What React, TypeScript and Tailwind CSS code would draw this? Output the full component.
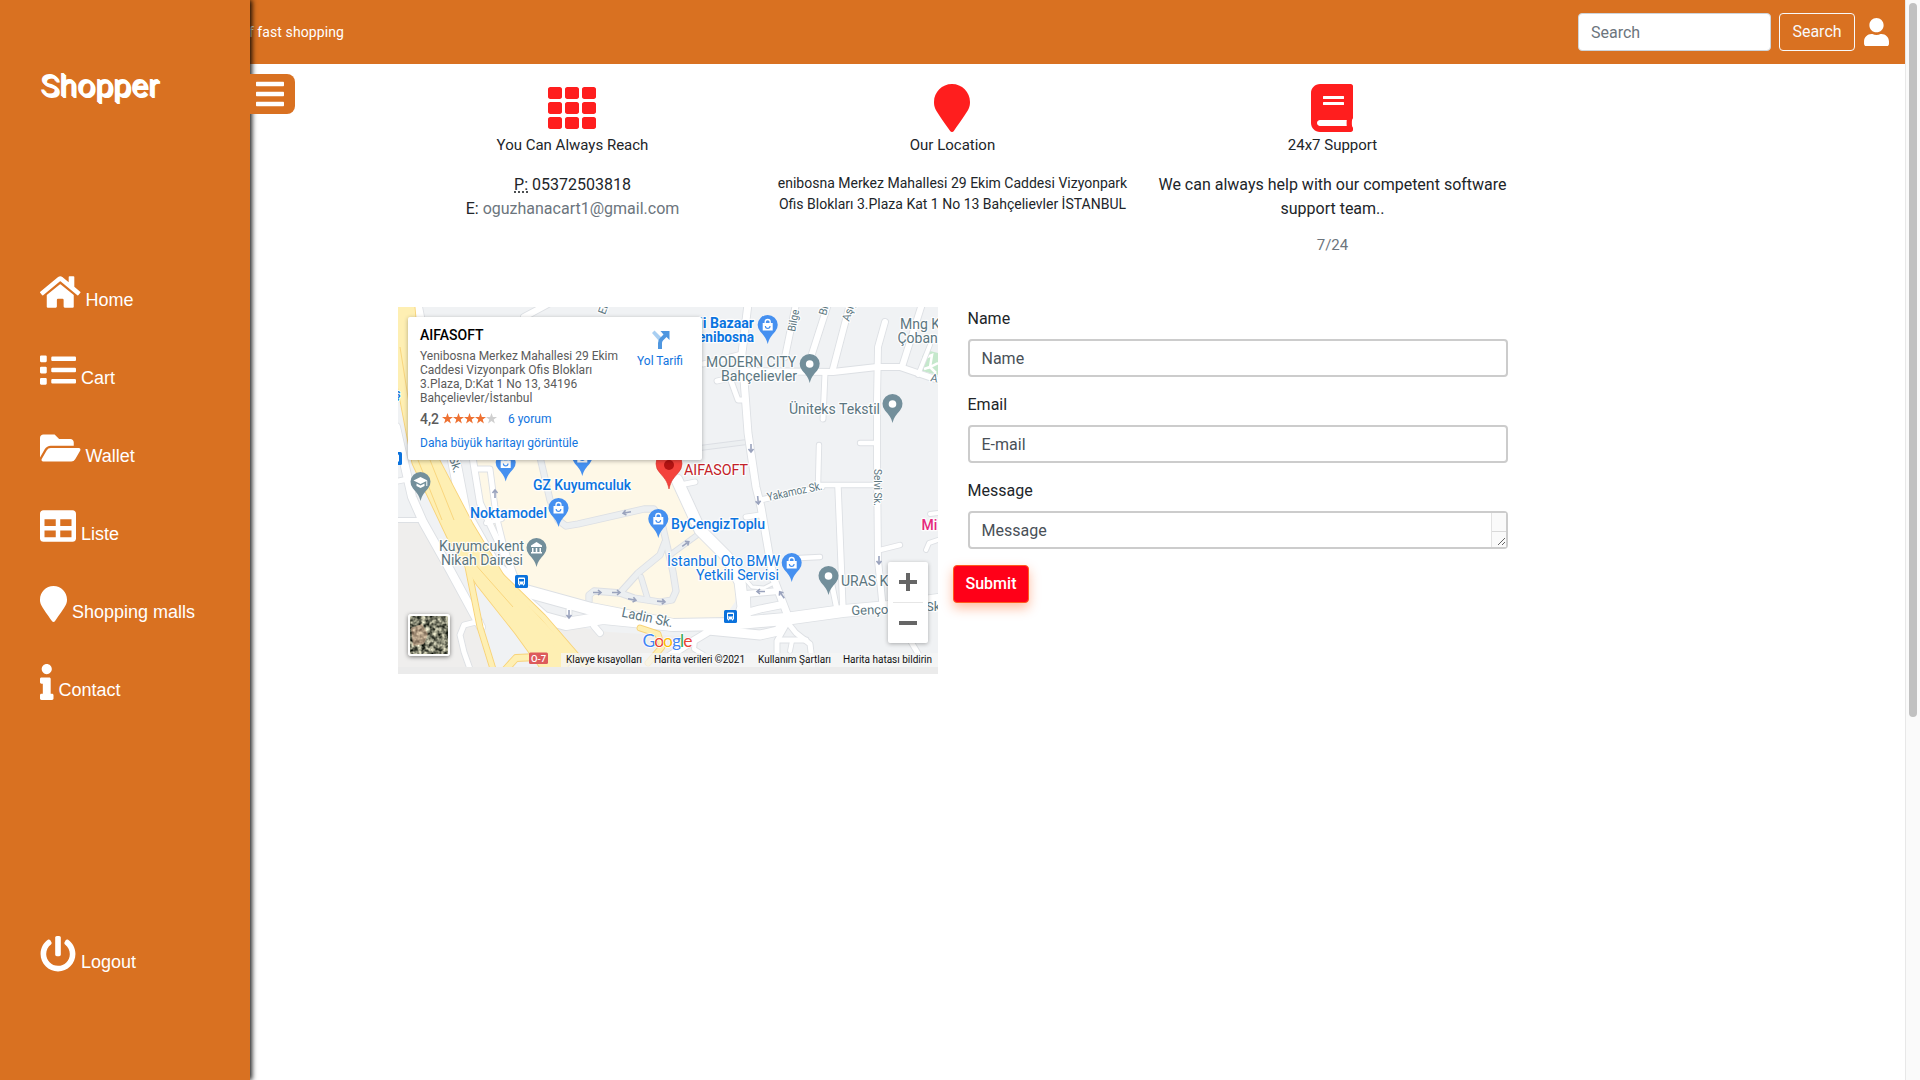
import React from "react";
import {
  FaBars, FaBook, FaFolderOpen, FaHome, FaInfo, FaList, FaMapMarker,
  FaPowerOff, FaTable, FaTh, FaUser,
} from "react-icons/fa";

type Road = [string, number];

const nav = [
  { label: "Home", icon: <FaHome className="h-9 w-[40.5px]" /> },
  { label: "Cart", icon: <FaList className="h-9 w-9" /> },
  { label: "Wallet", icon: <FaFolderOpen className="h-9 w-[40.5px]" /> },
  { label: "Liste", icon: <FaTable className="h-9 w-9" /> },
  { label: "Shopping malls", icon: <FaMapMarker className="h-9 w-[27px]" /> },
  { label: "Contact", icon: <FaInfo className="h-9 w-[13.5px]" /> },
];

function NavItem({ label, icon }: { label: string; icon: React.ReactNode }) {
  return (
    <a className="flex h-9 items-end gap-[5px] text-white">
      {icon}
      <span className="mb-[1.5px] whitespace-nowrap font-['Liberation_Sans',sans-serif] text-[18px] leading-[18px]">{label}</span>
    </a>
  );
}

function Sidebar() {
  return (
    <aside className="absolute left-0 top-0 z-10 flex h-[1080px] w-[250px] flex-col bg-[#d97121] pl-10 shadow-[2px_0_5px_rgba(0,0,0,0.9)]">
      <div className="mt-[65px] h-10 text-[32px] leading-10 text-white [text-shadow:1px_1px_0_#fff,2px_2px_0_#fff]">Shopper</div>
      <nav className="mt-[169px] flex flex-col gap-[42px]">
        {nav.map((n) => <NavItem key={n.label} {...n} />)}
      </nav>
      <div className="mt-[236px]">
        <NavItem label="Logout" icon={<FaPowerOff className="h-9 w-9" />} />
      </div>
    </aside>
  );
}

/* ---------- map ---------- */

const roads: Road[] = [
  ["M18 0L30 60L56 153L66 205L96 258L124 283L193 302L275 318L330 317L387 312L445 304L490 300L540 293", 12],
  ["M98 262L120 288L146 311L168 317L205 311L275 318", 12],
  ["M0 174L10 172L14 185", 5],
  ["M0 213L25 213", 4],
  ["M-2 120L14 190L25 215L52 263L83 320", 8],
  ["M82 314L66 318L62 328L66 345L72 362", 5],
  ["M75 153L82 196L98 230L114 265", 6],
  ["M78 162L92 162L98 208L106 240L117 270", 5],
  ["M88 216L104 212", 4],
  ["M126 10L152 -4", 6],
  ["M350 -3L344 46L350 126L358 180L363 200L375 270L391 312", 7],
  ["M305 57L344 47", 5],
  ["M279 173L302 223L329 250L342 275L345 300L340 316", 11],
  ["M282 178L297 175", 5],
  ["M346 64L435 65L479 60L502 60L540 73", 6],
  ["M398 -3L387 50", 6],
  ["M430 -3L413 50", 6],
  ["M452 -3L435 62", 6],
  ["M487 15L480 40L479 93L479 153L480 253L485 303", 6],
  ["M427 66L425 112", 5],
  ["M421 138L420 178L475 178", 4.5],
  ["M440 180L445 303", 5.5],
  ["M362 193L424 180", 5],
  ["M462 136L479 136", 4.5],
  ["M502 238L482 243", 4.5],
  ["M524 -3L504 60", 6],
  ["M532 38L520 68", 4],
  ["M319 74L332 71L340 93L348 93", 5],
  ["M348 210L362 208", 5],
  ["M402 251L422 250", 4.5],
  ["M434 278L439 303", 5],
  ["M540 233L531 236L528 243", 4],
  ["M532 207L540 206", 4],
  ["M512 333L525 355", 5],
  ["M348 287L380 284", 6],
  ["M340 308L362 302L382 298", 7],
  ["M347 272L354 280L366 281L378 275", 3],
  ["M349 290L350 318", 6],
  ["M388 312L380 324L362 328L310 323", 9],
  ["M310 325L290 337L270 350", 7],
  ["M297 333L296 342L306 348L320 356", 4],
  ["M388 318L379 334L379 362", 5],
  ["M390 316L398 326L412 337L415 362", 5],
  ["M380 333L408 333", 5],
  ["M394 334L392 344", 4],
  ["M171 303L171 315", 5],
  ["M196 319L202 326", 6],
];

const yellow: Road[] = [
  ["M66 240L82 320L95 362", 5],
  ["M96 262L145 310L190 362", 5],
  ["M30 153L66 222L104 285L165 350", 20],
  ["M4 -5L12 80L26 153L60 225L88 270L126 318L158 362", 24],
  ["M108 362L118 351L140 350", 6],
  ["M242 321L260 327L264 340L250 356", 5],
];

const lanes: Road[] = [
  ["M302 141L349 135", 4],
  ["M142 150L152 193L160 213L168 219L180 217L246 202L256 202L263 212L275 265L278 284L274 293L262 295L236 291L222 286L196 284L191 288L191 294", 5.5],
  ["M222 286L240 266L262 248L267 235", 5.5],
  ["M243 270L250 293", 4.5],
  ["M272 248L302 226", 4.5],
];

function Roads({ list, edge, fill }: { list: Road[]; edge: string; fill: string }) {
  return (
    <g fill="none" strokeLinecap="round" strokeLinejoin="round">
      {list.map(([d, w]) => <path key={d} d={d} stroke={edge} strokeWidth={w + 1.8} />)}
      {list.map(([d, w]) => <path key={d} d={d} stroke={fill} strokeWidth={w} />)}
    </g>
  );
}

function Pin({ x, y, color, kind }: { x: number; y: number; color: string; kind: "bag" | "dot" | "school" | "museum" }) {
  return (
    <g transform={`translate(${x} ${y})`}>
      <path d="M0 19C-1.5 13-4 10.5-7.5 6.5A10 10 0 1 1 7.5 6.5C4 10.5 1.5 13 0 19Z" fill={color} />
      {kind === "dot" && <circle r="3.8" fill="#fff" />}
      {kind === "bag" && (
        <g>
          <path d="M-5 -2H5V5.500H-5Z" fill="#fff" />
          <path d="M-2.500 -2V-3A2.500 2.500 0 0 1 2.500 -3V-2" fill="none" stroke="#fff" strokeWidth="1.300" />
          <path d="M-2.300 1A2.300 2.300 0 0 0 2.300 1" fill="none" stroke={color} strokeWidth="1.200" />
        </g>
      )}
      {kind === "school" && (
        <g>
          <path d="M-7 -1.500L0 -5L7 -1.500L0 2Z" fill="#fff" />
          <path d="M-4 1.500L0 3.500L4 1.500V4L0 6L-4 4Z" fill="#fff" />
          <path d="M6.300 -1V4" stroke="#fff" strokeWidth="1" />
        </g>
      )}
      {kind === "museum" && (
        <g fill="#fff">
          <path d="M-5.500 -2.500L0 -6L5.500 -2.500V-1H-5.500Z" />
          <path d="M-4.500 0H-3V4H-4.500ZM-.8 0H.8V4H-.8ZM3 0H4.500V4H3ZM-5.500 4H5.500V5.500H-5.500Z" />
        </g>
      )}
    </g>
  );
}

function Bus({ x, y }: { x: number; y: number }) {
  return (
    <g transform={`translate(${x} ${y})`}>
      <rect width="13" height="13" rx="1.500" fill="#0b72dc" />
      <path d="M3 3.500Q3 2.500 4 2.500H9Q10 2.500 10 3.500V9.500H9V10.500H8V9.500H5V10.500H4V9.500H3Z" fill="#fff" />
      <path d="M4 4H9V6.500H4Z" fill="#0b72dc" />
      <path d="M4 7.600H5V8.400H4ZM8 7.600H9V8.400H8Z" fill="#0b72dc" />
    </g>
  );
}

type L = { t: string; x: number; y: number; w?: number; c: string; r?: number; s?: number; b?: number };
const BLUE = "#0b74e0";
const GRAY = "#5b7680";
const labels: L[] = [
  { t: "ji Bazaar", x: 301, y: 21, w: 55, c: BLUE, b: 700 },
  { t: "enibosna", x: 300, y: 35, w: 56, c: BLUE, b: 700 },
  { t: "MODERN CITY", x: 308, y: 60, w: 90, c: GRAY },
  { t: "Bahçelievler", x: 323, y: 74, w: 76, c: GRAY },
  { t: "Üniteks Tekstil", x: 391, y: 107, w: 91, c: GRAY },
  { t: "Mng K", x: 502, y: 22, c: GRAY },
  { t: "Çoban", x: 499.5, y: 36, c: GRAY },
  { t: "AIFASOFT", x: 286, y: 168, w: 64, c: "#c32127" },
  { t: "GZ Kuyumculuk", x: 135, y: 183, w: 98, c: BLUE, b: 500 },
  { t: "Noktamodel", x: 72, y: 211, w: 77, c: BLUE, b: 500 },
  { t: "Kuyumcukent", x: 41, y: 244, w: 85, c: GRAY },
  { t: "Nikah Dairesi", x: 43, y: 258, w: 82, c: GRAY },
  { t: "ByCengizToplu", x: 273, y: 222, w: 94, c: BLUE, b: 500 },
  { t: "İstanbul Oto BMW", x: 269, y: 259, w: 113, c: BLUE },
  { t: "Yetkili Servisi", x: 298, y: 273, w: 83, c: BLUE },
  { t: "URAS K", x: 443, y: 279, c: GRAY },
  { t: "Genço", x: 453.500, y: 308, w: 37, c: GRAY, r: -2, s: 13 },
  { t: "Sk", x: 528, y: 304, c: GRAY, s: 13 },
  { t: "Ladin Sk.", x: 223, y: 309.500, w: 52, c: GRAY, r: 12, s: 14 },
  { t: "Yakamoz Sk.", x: 370, y: 194, w: 56, c: GRAY, r: -12, s: 11.500 },
  { t: "Selvi Sk.", x: 476, y: 162, w: 37, c: GRAY, r: 90, s: 11 },
  { t: "Bilge", x: 397, y: 25, w: 22, c: GRAY, r: -79, s: 11 },
  { t: "Bi", x: 428, y: 9, c: GRAY, r: -75, s: 11 },
  { t: "Aşiy", x: 451, y: 15, c: GRAY, r: -72, s: 11 },
  { t: "Mi", x: 523.500, y: 223, c: "#e5277b", b: 500 },
  { t: "Sk.", x: 51, y: 151, c: GRAY, r: 72, s: 12 },
  { t: "Eı", x: 207, y: 8, c: GRAY, r: -70, s: 11 },
  { t: "A.", x: 532, y: 74, c: GRAY, r: 12, s: 11 },
  { t: "ş", x: -4, y: 91, c: BLUE, b: 500, s: 13 },
];

const arrows: [number, number, number][] = [
  [199, 285.500, 0], [218, 285.500, 0], [234, 292.500, 10], [263, 294.500, 5], [229, 205.500, 170],
  [97, 187, -90], [171, 307, 90], [353, 141, 90], [360, 193, 85], [481, 253, 90],
  [287.500, 237, -35], [363, 284.500, 180], [384, 288, -125],
];

const googleLetters: [string, string][] = [["G", "#4285f4"], ["o", "#ea4335"], ["o", "#fbbc05"], ["g", "#4285f4"], ["l", "#34a853"], ["e", "#ea4335"]];

function MapDrawing() {
  return (
    <svg className="block h-[360px] w-[540px]" viewBox="0 0 540 360" fontFamily="Roboto, sans-serif">
      <rect width="540" height="360" fill="#f0f2f4" />
      <path d="M0 210H24L82 320L95 360H0ZM100 285L150 315L210 325L300 330V360H160Z" fill="#efeeed" />
      <path d="M66 130H270L282 180L302 225L330 255L339 275L337 295L325 312H262L193 300L130 280L110 262L92 215L76 165Z" fill="#fef8e7" />
      <path d="M524 50L528 43L540 46V68L524 64Z" fill="#c5e8cc" />
      <path d="M524 52L534 48L532 60L540 56M526 62L532 60L538 66" stroke="#fff" strokeWidth="2.500" fill="none" />
      <Roads list={lanes} edge="#dcdfe4" fill="#eceff1" />
      <Roads list={roads} edge="#dde0e4" fill="#fff" />
      <Roads list={yellow} edge="#f8d379" fill="#feefb3" />
      <path d="M14 70L32 153L56 213M2 40L20 153L44 213M76 256L115 300" stroke="#f9d67e" strokeWidth="1" fill="none" />
      <g fill="none" stroke="#9aa3bd" strokeWidth="1.600">
        {arrows.map(([x, y, r], i) => (
          <path key={i} transform={`translate(${x} ${y}) rotate(${r})`} d="M-4 0H4M1 -2.500L4 0L1 2.500" />
        ))}
      </g>
      <g stroke="#fff" strokeOpacity="0.85" strokeLinejoin="round" strokeWidth="2.500" style={{ paintOrder: "stroke" }}>
        {labels.map((l, i) => (
          <text key={i} transform={`translate(${l.x} ${l.y}) rotate(${l.r ?? 0})`} textLength={l.w} lengthAdjust="spacingAndGlyphs" fontSize={l.s ?? 14} fontWeight={l.b ?? 400} fill={l.c}>{l.t}</text>
        ))}
      </g>
      <Pin x={369.700} y={18} color="#4590f0" kind="bag" />
      <Pin x={411.700} y={57} color="#738f9b" kind="dot" />
      <Pin x={494.500} y={97} color="#738f9b" kind="dot" />
      <Pin x={22.500} y={175} color="#738f9b" kind="school" />
      <Pin x={107.700} y={155.500} color="#4590f0" kind="bag" />
      <Pin x={184.300} y={150} color="#4590f0" kind="bag" />
      <Pin x={160.500} y={201} color="#4590f0" kind="bag" />
      <Pin x={138.500} y={241} color="#738f9b" kind="museum" />
      <Pin x={260.300} y={212} color="#4590f0" kind="bag" />
      <Pin x={393.700} y={256} color="#4590f0" kind="bag" />
      <Pin x={430.500} y={269} color="#738f9b" kind="dot" />
      <path d="M271 182C269 173 266 171 262 166A13 13 0 1 1 280 166C276 171 273 173 271 182Z" fill="#f4433c" stroke="#d8362f" strokeWidth="0.600" />
      <circle cx="271" cy="158" r="5" fill="#b31312" />
      <Bus x={117} y={268} />
      <Bus x={326} y={303} />
      <Bus x={-9} y={145} />
      <rect x="131" y="345.500" width="19" height="11.500" rx="1.500" fill="#dd5b5b" />
      <text x="140.500" y="354.500" fontSize="9.500" fontWeight="500" textAnchor="middle" fill="#fff">O-7</text>
      <text x="244.500" y="340" fontSize="17.500" fontFamily="Lato, sans-serif" fontWeight="400" textLength="50" stroke="#fff" strokeWidth="1.500" style={{ paintOrder: "stroke" }}>
        {googleLetters.map(([c, f], i) => <tspan key={i} fill={f}>{c}</tspan>)}
      </text>
      <rect x="163" y="346" width="377" height="14" fill="#f5f5f5" fillOpacity="0.75" />
      <g fontSize="10" fill="#111">
        <text x="168" y="356.300" textLength="76">Klavye kısayolları</text>
        <text x="256" y="356.300" textLength="91">Harita verileri ©2021</text>
        <text x="360" y="356.300" textLength="73">Kullanım Şartları</text>
        <text x="445" y="356.300" textLength="89">Harita hatası bildirin</text>
      </g>
    </svg>
  );
}

function SatelliteThumb() {
  return (
    <div className="absolute left-[10px] top-[307px] h-[42px] w-[42px] overflow-hidden rounded-[3px] border-2 border-white shadow-[0_1px_4px_rgba(0,0,0,0.5)]">
      <svg className="block h-full w-full" viewBox="0 0 38 38">
        <defs>
          <filter id="terrain" x="0" y="0" width="100%" height="100%" colorInterpolationFilters="sRGB">
            <feTurbulence type="fractalNoise" baseFrequency="0.25" numOctaves="3" seed="4" />
            <feColorMatrix values="1.5 0 0 0 -0.25  1.45 0 0 0 -0.22  1.3 0 0 0 -0.22  0 0 0 0 1" />
          </filter>
        </defs>
        <rect width="38" height="38" filter="url(#terrain)" />
        <path d="M1 12L12 8L18 18L14 28L3 30Z" fill="#dcb193" fillOpacity="0.500" />
      </svg>
    </div>
  );
}

function MapPanel() {
  return (
    <div className="relative h-[367px] w-[540px] overflow-hidden bg-[#ebebeb]">
      <MapDrawing />
      <div className="absolute left-[10.500px] top-[10px] flex h-[143px] w-[294px] justify-between rounded-[2px] bg-white pl-3 pr-[19px] shadow-[0_1px_4px_rgba(0,0,0,0.3)]">
        <div className="w-[204px] whitespace-nowrap text-[12px] leading-[14px] text-[#5b5b5b]">
          <div className="mt-[10px] text-[14px] font-medium leading-4 text-black">AIFASOFT</div>
          <div className="mt-[6px]">Yenibosna Merkez Mahallesi 29 Ekim<br />Caddesi Vizyonpark Ofis Blokları<br />3.Plaza, D:Kat 1 No 13, 34196<br />Bahçelievler/İstanbul</div>
          <div className="mt-[6px] flex h-4 items-center">
            <span className="-mt-px text-[14px] font-medium">4,2</span>
            <svg className="ml-[3px] mt-[-2px] h-[11px] w-[55px]" viewBox="0 0 55 11">
              {[0, 1, 2, 3, 4].map((i) => (
                <path key={i} transform={`translate(${i * 11} 0)`} fill={i < 4 ? "#ee7132" : "#cfcfcf"} d="M5.500 0L6.900 3.900H11L7.700 6.400L8.900 10.600L5.500 8.100L2.100 10.600L3.300 6.400L0 3.900H4.100Z" />
              ))}
            </svg>
            <span className="ml-[11px] text-[#1174e0]">6 yorum</span>
          </div>
          <div className="mt-[9px] text-[#1174e0]">Daha büyük haritayı görüntüle</div>
        </div>
        <div className="flex flex-col items-center whitespace-nowrap pt-[13px] text-[12px] leading-[14px] text-[#1174e0]">
          <svg className="h-[19px] w-[19px]" viewBox="0 0 19 19">
            <path d="M1 3L3.500 .5L10.500 7.500L8 11Z" fill="#a9cff2" />
            <path d="M7 19V13Q7 10 9 8L12.500 4.500L9.500 1H18.500V10L15.500 7L12 10.500Q11 11.500 11 13V19Z" fill="#4f97e0" />
          </svg>
          <span className="mt-[5px]">Yol Tarifi</span>
        </div>
      </div>
      <SatelliteThumb />
      <div className="absolute left-[490px] top-[255px] flex h-[81px] w-10 flex-col items-center rounded-[2px] bg-white shadow-[0_1px_4px_rgba(0,0,0,0.3)]">
        <svg className="h-10 w-10" viewBox="0 0 40 40"><path d="M18 11H22V18H29V22H22V29H18V22H11V18H18Z" fill="#666" /></svg>
        <div className="h-px w-[30px] bg-[#e6e6e6]" />
        <svg className="h-10 w-10" viewBox="0 0 40 40"><path d="M11 18H29V22H11Z" fill="#666" /></svg>
      </div>
    </div>
  );
}

/* ---------- page ---------- */

function Header() {
  return (
    <header className="flex h-16 w-[1905px] items-center bg-[#d97121] text-white">
      <div className="w-[344px] text-right text-[14px] leading-5 tracking-[0.1px]">f fast shopping</div>
      <div className="ml-auto flex items-center pr-4">
        <div className="flex h-[38px] w-[193px] items-center rounded border border-[#ced4da] bg-white px-3 pt-px text-[16px] text-[#6c757d]">Search</div>
        <button className="ml-2 flex h-[38px] w-[76px] items-center justify-center rounded border border-[#f8f9fa] text-[16px] text-[#f8f9fa]">Search</button>
        <FaUser className="ml-[9px] h-[28.500px] w-[25px]" />
      </div>
    </header>
  );
}

function Features() {
  return (
    <section className="mt-5 flex h-[223px] text-center text-[16px] leading-6 text-[#212529]">
      <div className="flex w-[380px] flex-col items-center">
        <FaTh className="mr-px h-12 w-12 text-[#ff1e1e]" />
        <h5 className="h-[41px] text-[15px] leading-[27px]">You Can Always Reach</h5>
        <p><span className="underline decoration-dotted underline-offset-2">P:</span> 05372503818</p>
        <p>E: <span className="text-[#6c757d]">oguzhanacart1@gmail.com</span></p>
      </div>
      <div className="flex w-[380px] flex-col items-center">
        <FaMapMarker className="mr-px h-12 w-9 text-[#ff1e1e]" />
        <h5 className="h-[41px] text-[15px] leading-[27px]">Our Location</h5>
        <p className="whitespace-nowrap text-[14px] leading-[21px]">enibosna Merkez Mahallesi 29 Ekim Caddesi Vizyonpark<br />Ofis Blokları 3.Plaza Kat 1 No 13 Bahçelievler İSTANBUL</p>
      </div>
      <div className="flex w-[380px] flex-col items-center">
        <FaBook className="mr-px h-12 w-[42px] text-[#ff1e1e]" />
        <h5 className="h-[41px] text-[15px] leading-[27px]">24x7 Support</h5>
        <p className="whitespace-nowrap">We can always help with our competent software<br />support team..</p>
        <p className="mt-3 text-[15px] text-[#6c757d]">7/24</p>
      </div>
    </section>
  );
}

function Field({ label, text, area }: { label: string; text: string; area?: boolean }) {
  return (
    <div className="mb-4">
      <div className="mb-2 text-[16px] leading-6 text-[#212529]">{label}</div>
      <div className="flex h-[38px] w-[540px] items-stretch justify-between rounded border-2 border-[#ccc] bg-white pl-3 text-[16px] text-[#495057]">
        <span className="leading-9">{text}</span>
        {area && (
          <div className="flex w-[15px] flex-col border-l border-[#e2e2e2] bg-[#fafafa]">
            <div className="h-[19px] border-b border-[#d9d9d9]" />
            <svg className="h-[15px] w-[14px]" viewBox="0 0 14 15"><path d="M6 13L13 6M10 13L13 10" stroke="#555" strokeWidth="0.900" /></svg>
          </div>
        )}
      </div>
    </div>
  );
}

export default function App() {
  return (
    <div className="relative h-[1080px] w-[1920px] overflow-hidden bg-white font-[Roboto,sans-serif]">
      <Header />
      <main className="ml-[382.500px] w-[1140px]">
        <Features />
        <section className="flex">
          <div className="w-[570px] pl-[15px]"><MapPanel /></div>
          <div className="w-[570px]">
            <div className="pl-[15px]">
              <Field label="Name" text="Name" />
              <Field label="Email" text="E-mail" />
              <Field label="Message" text="Message" area />
            </div>
            <button className="ml-[0.500px] flex h-[38px] w-[76px] items-center justify-center rounded border border-[#ff5a1c] bg-[#ff0018] text-[16px] font-medium text-white shadow-[0_5px_12px_rgba(255,90,20,0.400)]">Submit</button>
          </div>
        </section>
      </main>
      <Sidebar />
      <button className="absolute left-[250px] top-[74px] z-20 flex h-10 w-[45px] items-center rounded-r-lg bg-[#d97121] pl-[6px] text-white">
        <FaBars className="h-8 w-7" />
      </button>
      <div className="absolute right-0 top-0 h-[1080px] w-[15px] border-l border-[#e8e8e8] bg-[#fafafa] pl-[3px] pt-[3px]">
        <div className="h-[714px] w-2 rounded-full bg-[#c1c1c1]" />
      </div>
    </div>
  );
}
